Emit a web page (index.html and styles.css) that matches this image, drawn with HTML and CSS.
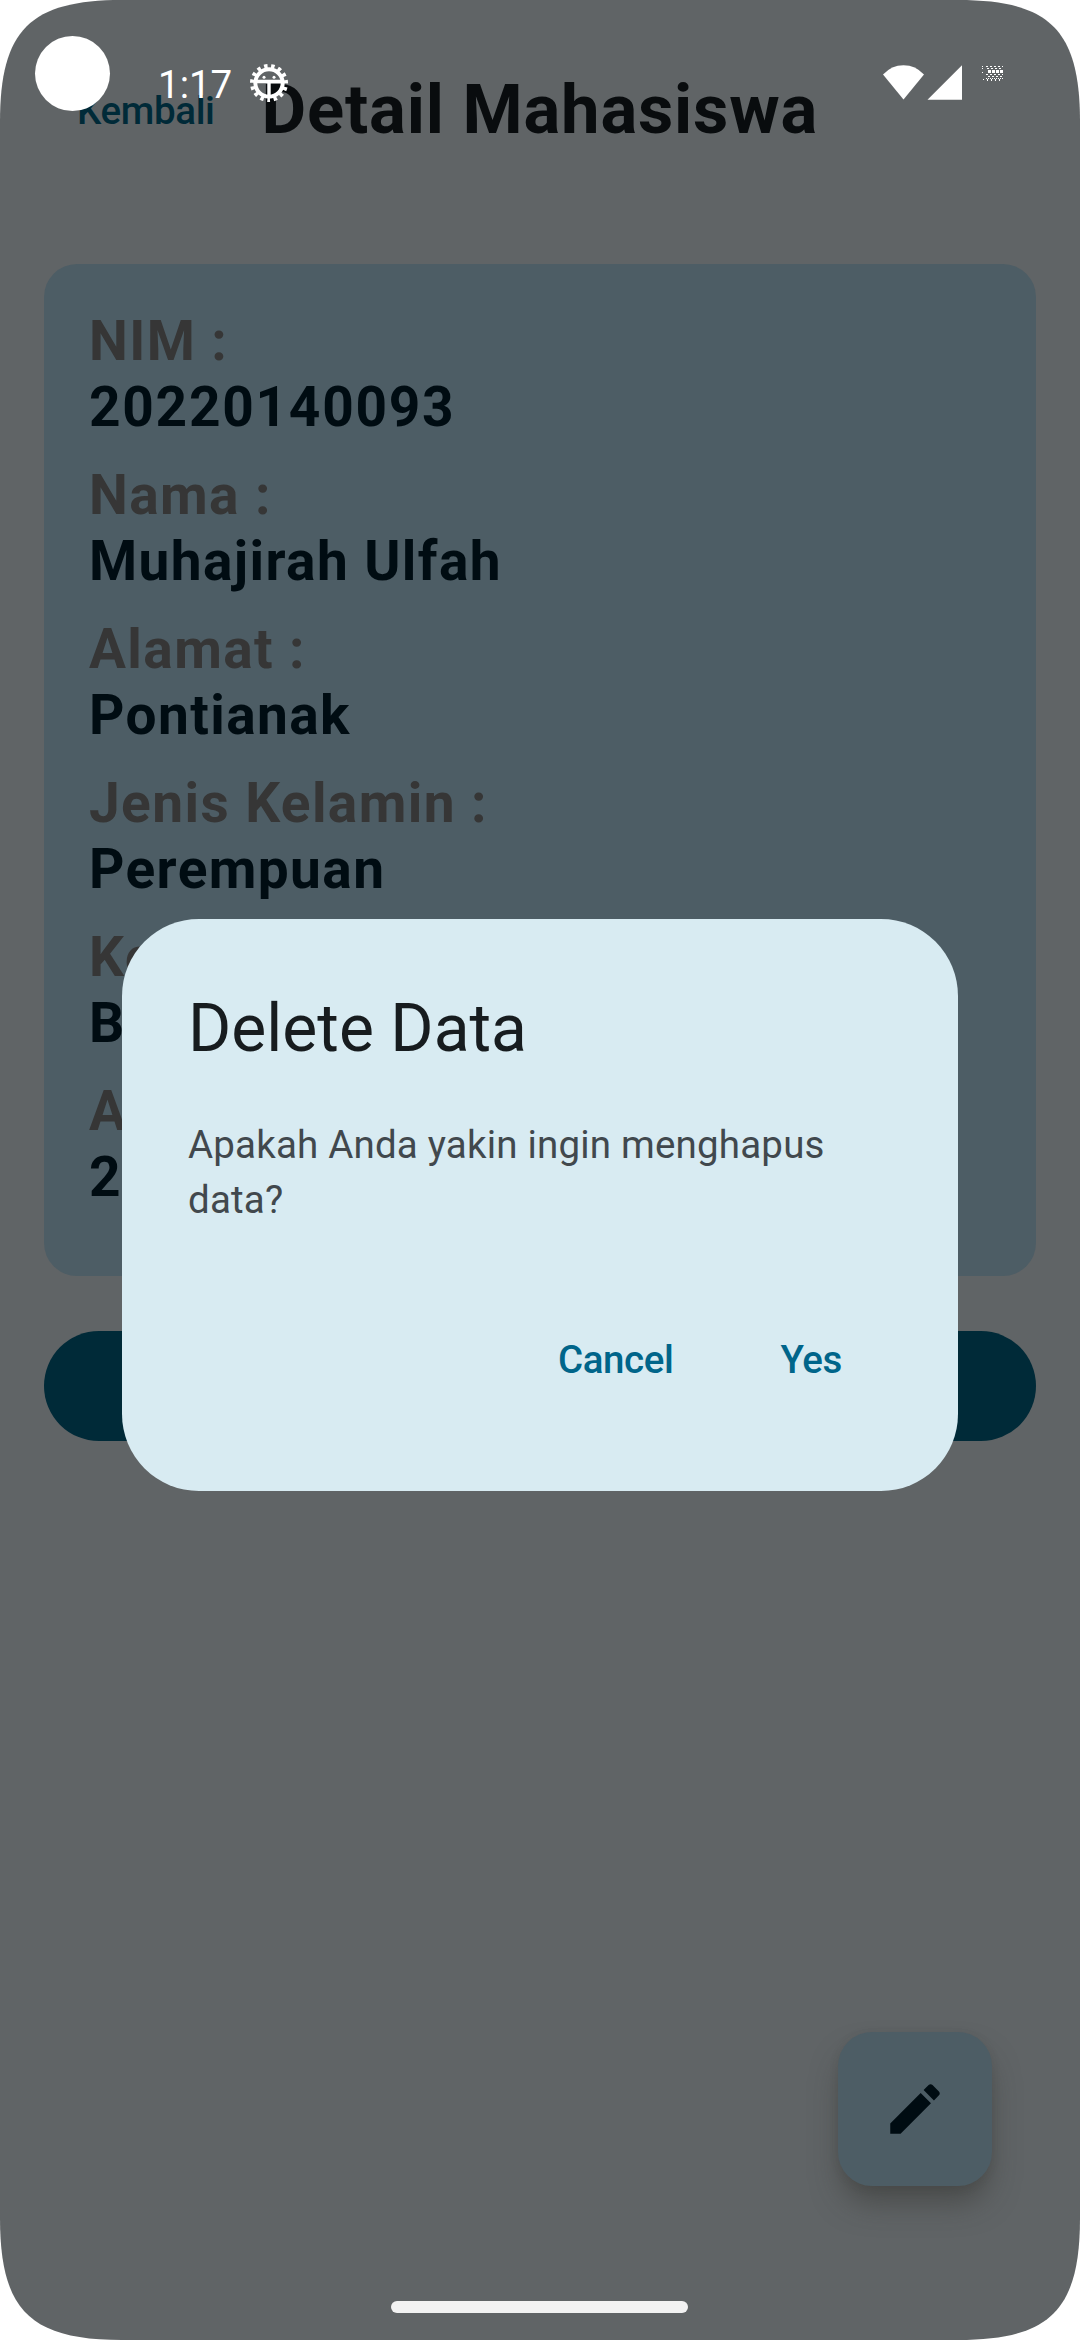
FILE: index.html
```
<!DOCTYPE html>
<html lang="id">
<head>
<meta charset="utf-8">
<title>Detail Mahasiswa</title>
<link rel="stylesheet" href="styles.css">
</head>
<body>
<div class="screen">
  <header class="app-bar">
    <span class="back">Kembali</span>
    <h1 class="app-title">Detail Mahasiswa</h1>
  </header>
  <main class="content">
    <section class="card">
      <div class="field"><div class="label">NIM :</div><div class="value number">20220140093</div></div>
      <div class="field"><div class="label">Nama :</div><div class="value">Muhajirah Ulfah</div></div>
      <div class="field"><div class="label">Alamat :</div><div class="value">Pontianak</div></div>
      <div class="field"><div class="label">Jenis Kelamin :</div><div class="value">Perempuan</div></div>
      <div class="field"><div class="label">Ke</div><div class="value">B</div></div>
      <div class="field"><div class="label">A</div><div class="value">2</div></div>
    </section>
    <div class="delete-button"></div>
  </main>
  <div class="fab">
    <svg width="66" height="66" viewBox="0 0 24 24"><path fill="#000c12" d="M3 17.25V21h3.75L17.81 9.94l-3.75-3.75L3 17.25zM20.71 7.04c.39-.39.39-1.02 0-1.41l-2.34-2.34c-.39-.39-1.02-.39-1.41 0l-1.83 1.83 3.75 3.75 1.83-1.83z"/></svg>
  </div>

  <div class="dialog">
    <h2 class="dialog-title">Delete Data</h2>
    <p class="dialog-text">Apakah Anda yakin ingin menghapus data?</p>
    <div class="dialog-actions">
      <span class="action">Cancel</span>
      <span class="action">Yes</span>
    </div>
  </div>

  <div class="status-bar">
    <span class="camera"></span>
    <span class="clock">1:17</span>
    <svg class="gear" width="40" height="40" viewBox="-20 -20 40 40">
      <circle r="13.7" fill="none" stroke="#fff" stroke-width="4"/>
      <circle r="16.8" fill="none" stroke="#fff" stroke-width="4.4" stroke-dasharray="3.4 3.637" stroke-dashoffset="1.7" transform="rotate(90)"/>
      <path d="M-13 -1.5H13M0 -1V14" stroke="#fff" stroke-width="3.4" fill="none"/>
      <circle cx="-5" cy="-5.7" r="1.5" fill="#fff"/><circle cx="5" cy="-5.7" r="1.5" fill="#fff"/>
    </svg>
    <svg class="signals" width="130" height="40" viewBox="880 62 130 40" fill="#fff">
      <path d="M903.5 99.5L883 74.5Q891.5 65.2 903.5 65.2T924 74.5Z"/>
      <path d="M927.5 99.7H962V65.3Z"/>
      <g fill="none" stroke="#fff" shape-rendering="crispEdges">
        <path d="M982 66.5h1M982 68.5h1M982 72.5h1M983 79.5h1" />
        <path d="M986 66.5h17M987 68.5h16M986 74.5h17M988 76.5h15" stroke-dasharray="2 2"/>
        <path d="M988 71.5h15" stroke-width="3" stroke-dasharray="3 1"/>
        <path d="M986 78.5h17" stroke-dasharray="1 1"/>
        <path d="M987 80h16" stroke-width="2" stroke-dasharray="1 3"/>
      </g>
    </svg>
  </div>
  <div class="home-bar"></div>
</div>
</body>
</html>
```
FILE: styles.css
```
body { margin: 0; background: #fff; font-family: Roboto, sans-serif; }
h1, h2, p { margin: 0; }
svg { display: block; }

.screen {
  position: relative;
  width: 1080px;
  height: 2340px;
  overflow: hidden;
  background: #606466;
  clip-path: path("M0 122C0 30 30 0 122 0H958C1050 0 1080 30 1080 122V2218C1080 2310 1050 2340 958 2340H122C30 2340 0 2310 0 2218Z");
}

.app-bar {
  display: flex;
  align-items: center;
  box-sizing: border-box;
  height: 220px;
  padding: 1px 77px 0;
}
.back { font-size: 38.5px; font-weight: 500; letter-spacing: -.35px; line-height: 57px; color: #002a38; }
.app-title { margin: 0 0 2px 47px; font-size: 68.75px; font-weight: 700; line-height: 80px; letter-spacing: .8px; color: #090c0e; }

.content { padding: 44px; }
.card {
  box-sizing: border-box;
  height: 1012px;
  padding: 44px 44px 44px 45px;
  border-radius: 33px;
  background: #4d5d65;
}
.field {
  margin-bottom: 22px;
  font-size: 55px;
  font-weight: 700;
  line-height: 66px;
  letter-spacing: 1.4px;
}
.label { color: #363636; }
.value { color: #000c12; }
.number { letter-spacing: 1.75px; }
.delete-button { height: 110px; margin-top: 55px; border-radius: 55px; background: #002a38; }

.fab {
  position: absolute;
  right: 88px;
  bottom: 154px;
  display: flex;
  align-items: center;
  justify-content: center;
  width: 154px;
  height: 154px;
  border-radius: 34px;
  background: #4d5d65;
  box-shadow: 0 20px 30px -4px rgba(50, 50, 45, .5), 0 2px 10px rgba(50, 50, 45, .12);
}

.dialog {
  position: absolute;
  top: 919px;
  left: 122px;
  box-sizing: border-box;
  width: 836px;
  height: 572px;
  padding: 66px;
  border-radius: 77px;
  background: #d8ebf2;
}
.dialog-title { font-size: 66px; font-weight: 400; line-height: 88px; color: #171c1f; }
.dialog-text { margin-top: 44px; font-size: 38.5px; line-height: 55px; letter-spacing: .19px; color: #41484d; }
.dialog-actions { display: flex; justify-content: flex-end; gap: 7px; align-items: center; height: 132px; margin-top: 66px; }
.action { padding: 0 50px; font-size: 38.5px; font-weight: 500; line-height: 55px; letter-spacing: -.4px; color: #00658a; }

.status-bar {
  position: absolute;
  top: 0;
  left: 0;
  display: flex;
  align-items: flex-start;
  width: 1080px;
  height: 142px;
  color: #fff;
}
.camera { width: 75px; height: 75px; margin: 36px 0 0 35px; border-radius: 50%; background: #fff; }
.clock { width: 80px; margin: 57px 0 0 48px; font-size: 38.5px; line-height: 55px; }
.gear { margin: 63px 0 0 11px; }
.signals { margin: 62px 70px 0 auto; }

.home-bar {
  position: absolute;
  left: 391px;
  bottom: 27px;
  width: 297px;
  height: 12px;
  border-radius: 6px;
  background: #f2f2f2;
}
```
